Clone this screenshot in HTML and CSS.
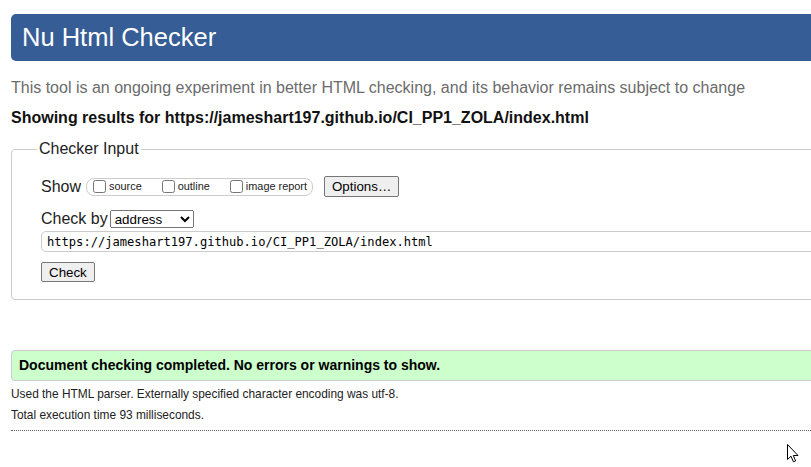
FILE: index.html
```html
<!DOCTYPE html>
<html lang="en">
<head>
<meta charset="utf-8">
<title>Showing results for https://jameshart197.github.io/CI_PP1_ZOLA/index.html - Nu Html Checker</title>
<link rel="stylesheet" href="styles.css">
</head>
<body>
<div class="page">
  <h1 class="title">Nu Html Checker</h1>
  <p class="intro">This tool is an ongoing experiment in better HTML checking, and its behavior remains subject to change</p>
  <p class="results-for">Showing results for https://jameshart197.github.io/CI_PP1_ZOLA/index.html</p>
  <form class="checker-form">
    <fieldset class="checker">
      <legend class="checker-legend">Checker Input</legend>
      <div class="row row-show">
        <span class="row-label label-show">Show</span>
        <span class="show-box">
          <label class="opt"><input type="checkbox" class="cb">source</label>
          <label class="opt"><input type="checkbox" class="cb">outline</label>
          <label class="opt"><input type="checkbox" class="cb">image report</label>
        </span>
        <button type="button" class="btn btn-options">Options…</button>
      </div>
      <div class="row row-checkby">
        <span class="row-label label-checkby">Check by</span>
        <select class="select"><option>address</option></select>
      </div>
      <div class="row row-url">
        <input class="url" type="text" value="https://jameshart197.github.io/CI_PP1_ZOLA/index.html">
      </div>
      <div class="row row-submit">
        <button type="button" class="btn btn-check">Check</button>
      </div>
    </fieldset>
  </form>
  <p class="success">Document checking completed. No errors or warnings to show.</p>
  <p class="details details-first">Used the HTML parser. Externally specified character encoding was utf-8.</p>
  <p class="details details-second">Total execution time 93 milliseconds.</p>
  <hr class="rule">
</div>
<svg class="cursor" width="13" height="20" viewBox="0 0 13 20" aria-hidden="true">
  <path d="M0.5 0.5 L0.5 15.5 L4 12.2 L6.4 17.8 L8.6 16.9 L6.3 11.5 L11 11.5 Z" fill="#fff" stroke="#000" stroke-width="1" stroke-linejoin="miter"/>
</svg>
</body>
</html>
```

FILE: styles.css
```css
html {
  overflow: hidden;
}

body {
  margin: 0;
  background: #fff;
  color: #000;
  font-family: "Liberation Sans", Arial, sans-serif;
}

.page {
  width: 1000px;
  padding: 14px 0 0 11px;
}

.title {
  margin: 0;
  height: 47px;
  line-height: 47px;
  padding-left: 11px;
  background: #365d95;
  color: #fff;
  font-size: 25.5px;
  font-weight: normal;
  border-radius: 5px;
}

.intro {
  margin: 18px 0 0;
  font-size: 16px;
  line-height: 18px;
  color: #6b6b6b;
}

.results-for {
  margin: 12px 0 0;
  font-size: 16px;
  line-height: 18px;
  font-weight: bold;
  color: #111;
}

.checker-form {
  margin: 13px 0 0;
}

.checker {
  margin: 0;
  min-width: 0;
  border: 1px solid #ccc;
  border-radius: 4px;
  padding: 18px 0 17px 25px;
}

.checker-legend {
  padding: 0 2px;
  font-size: 16px;
  line-height: 18px;
  color: #222;
}

.row {
  display: flex;
  align-items: center;
  margin-left: 4px;
}

.row-show {
  height: 21px;
}

.row-checkby {
  height: 20px;
  margin-top: 12px;
}

.row-url {
  height: 21px;
  margin-top: 2px;
}

.row-submit {
  height: 20px;
  margin-top: 10px;
}

.row-label {
  font-size: 16px;
  line-height: 18px;
  color: #222;
}

.label-show {
  margin-right: 5px;
}

.label-checkby {
  margin-right: 2px;
}

.show-box {
  display: flex;
  align-items: center;
  height: 16px;
  border: 1px solid #ccc;
  border-radius: 8px;
  padding: 0 5px 0 2px;
}

.opt {
  display: flex;
  align-items: center;
  font-size: 10.9px;
  line-height: 13px;
  color: #222;
  margin-right: 16px;
}

.opt:last-child {
  margin-right: 0;
}

.cb {
  width: 13px;
  height: 13px;
  margin: 0 3px 0 4px;
}

.btn {
  box-sizing: border-box;
  font-family: "Liberation Sans", Arial, sans-serif;
  font-size: 13.33px;
  color: #000;
  background: #efefef;
  border: 1px solid #767676;
  border-radius: 2px;
  padding: 0 7px;
}

.btn-options {
  height: 21px;
  margin-left: 11px;
  padding: 0 7px;
}

.btn-check {
  height: 20px;
  padding: 0 7px;
}

.select {
  box-sizing: border-box;
  width: 84px;
  height: 18px;
  font-family: "Liberation Sans", Arial, sans-serif;
  font-size: 13.33px;
  color: #000;
}

.url {
  box-sizing: border-box;
  width: 900px;
  height: 21px;
  border: 1px solid #ccc;
  border-radius: 5px;
  padding: 0 5px;
  font-family: "DejaVu Sans Mono", "Liberation Mono", monospace;
  font-size: 12.1px;
  color: #000;
}

.success {
  box-sizing: border-box;
  margin: 50px 0 0;
  height: 31px;
  line-height: 29px;
  padding-left: 7px;
  border: 1px solid #ccc;
  border-radius: 4px;
  background: #ccffcc;
  font-size: 14px;
  font-weight: bold;
  color: #000;
}

.details {
  margin: 0;
  font-size: 11.9px;
  line-height: 14px;
  color: #222;
}

.details-first {
  margin-top: 6px;
}

.details-second {
  margin-top: 7px;
}

.rule {
  margin: 8px 0 0;
  height: 0;
  border: 0;
  border-top: 1px dotted #666;
}

.cursor {
  position: absolute;
  left: 787px;
  top: 444px;
}
```
